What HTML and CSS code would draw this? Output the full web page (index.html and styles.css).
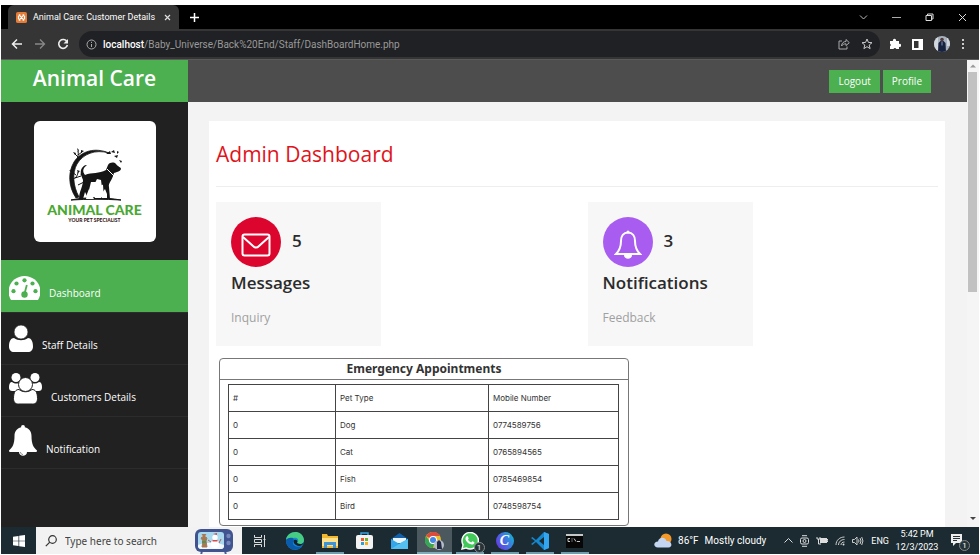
FILE: index.html
```html
<!DOCTYPE html>
<html lang="en">
<head>
<meta charset="utf-8">
<title>Animal Care: Customer Details</title>
<link rel="stylesheet" href="styles.css">
</head>
<body>
<div class="tabstrip">
  <div class="tab">
    <svg class="favicon" viewBox="0 0 12 12"><rect width="12" height="12" rx="2" fill="#e57b35"/><path d="M3.2 3.2 8.8 8.8M8.8 3.2 3.2 8.8M2.7 4v4M9.3 4v4M3 3.2h1.8M3 8.8h1.8M7.2 3.2H9M7.2 8.8H9" stroke="#fff" stroke-width="1.3" fill="none"/></svg>
    <span class="tab-title">Animal Care: Customer Details</span>
    <button class="icon-btn" aria-label="Close tab"><svg width="7" height="7" viewBox="0 0 7 7"><path d="M1 1l5 5M6 1L1 6" stroke="#ddd" stroke-width="1.2"/></svg></button>
  </div>
  <button class="icon-btn new-tab" aria-label="New tab"><svg width="9" height="9" viewBox="0 0 9 9"><path d="M4.500 0v9M0 4.500h9" stroke="#fff" stroke-width="1.5"/></svg></button>
  <div class="window-controls">
    <button class="icon-btn" aria-label="Search tabs"><svg width="9" height="9" viewBox="0 0 9 9"><path d="M1 2.500l3.500 3.500L8 2.500" stroke="#bbb" fill="none"/></svg></button>
    <button class="icon-btn" aria-label="Minimize"><svg width="9" height="9" viewBox="0 0 9 9"><path d="M0 4.500h9" stroke="#aaa"/></svg></button>
    <button class="icon-btn" aria-label="Restore"><svg width="9" height="9" viewBox="0 0 9 9"><path d="M1 2.500h5.500v5H1zM2.500 2.500v-1.500H8v5H6.500" stroke="#ddd" fill="none"/></svg></button>
    <button class="icon-btn" aria-label="Close"><svg width="9" height="9" viewBox="0 0 9 9"><path d="M1 1l7 7M8 1L1 8" stroke="#ddd"/></svg></button>
  </div>
</div>
<div class="toolbar">
  <div class="nav-buttons">
    <button class="icon-btn" aria-label="Back"><svg width="12" height="12" viewBox="0 0 12 12"><path d="M11 6H1.500M6 1.500L1.500 6 6 10.500" stroke="#eee" stroke-width="1.5" fill="none"/></svg></button>
    <button class="icon-btn" aria-label="Forward"><svg width="12" height="12" viewBox="0 0 12 12"><path d="M1 6h9.500M6 1.500L10.500 6 6 10.500" stroke="#888" stroke-width="1.3" fill="none"/></svg></button>
    <button class="icon-btn" aria-label="Reload"><svg width="12" height="12" viewBox="0 0 12 12"><path d="M10 3.800A4.400 4.400 0 1 0 10.400 7" stroke="#eee" stroke-width="1.6" fill="none"/><path d="M11 1v4.500H6.500z" fill="#eee"/></svg></button>
  </div>
  <div class="address">
    <svg width="11" height="11" viewBox="0 0 11 11"><circle cx="5.500" cy="5.500" r="4.500" fill="none" stroke="#aaa"/><path d="M5.500 5v3M5.500 2.800v1.200" stroke="#aaa"/></svg>
    <span class="url"><b>localhost</b>/Baby_Universe/Back%20End/Staff/DashBoardHome.php</span>
    <button class="icon-btn share" aria-label="Share"><svg width="12" height="12" viewBox="0 0 12 12"><path d="M4 3H1v8h8V8.500M3.500 8c.3-3 2-4.500 4.500-4.500V1.500L11.300 4.700 8 7.600V5.800C6 5.800 4.500 6.500 3.500 8z" fill="none" stroke="#aaa"/></svg></button>
    <button class="icon-btn" aria-label="Bookmark"><svg width="12" height="12" viewBox="0 0 12 12"><path d="M6 1l1.400 3.400 3.600.3-2.800 2.300.9 3.600L6 8.700l-3.100 1.900.9-3.600L1 4.700l3.600-.3z" fill="none" stroke="#ccc"/></svg></button>
  </div>
  <div class="extensions">
    <button class="icon-btn" aria-label="Extensions"><svg width="12" height="12" viewBox="0 0 12 12"><path d="M1 3h3a1.600 1.600 0 1 1 3 0h3v3a1.500 1.500 0 1 1 0 2.800V11H7.300a1.500 1.500 0 0 0-2.800 0H1V8.300a1.500 1.500 0 0 0 0-2.600z" fill="#fff"/></svg></button>
    <button class="icon-btn" aria-label="Side panel"><svg width="11" height="11" viewBox="0 0 11 11"><path d="M0 0h11v11H0zM2 2v7h4.500V2z" fill="#fff" fill-rule="evenodd"/></svg></button>
    <button class="icon-btn" aria-label="Account"><svg width="16" height="16" viewBox="0 0 16 16"><clipPath id="face"><circle cx="8" cy="8" r="8"/></clipPath><g clip-path="url(#face)"><path d="M0 0h16v16H0z" fill="#a9b3bf"/><path d="M0 0h4v16H0zM13 0h3v10h-3z" fill="#d2d8df"/><path d="M4.500 7l2-2h3l2 2 .5 9H4z" fill="#17233f"/><circle cx="8" cy="3.500" r="1.800" fill="#513c3b"/><path d="M7.500 5.500h1v4h-1z" fill="#8093b8"/></g></svg></button>
    <button class="icon-btn" aria-label="Menu"><svg width="4" height="12" viewBox="0 0 4 12"><path d="M1 1h2v2H1zM1 5h2v2H1zM1 9h2v2H1z" fill="#ccc"/></svg></button>
  </div>
</div>

<div class="viewport">
  <aside class="sidebar">
    <div class="brand">Animal Care</div>
    <div class="logo">
      <svg viewBox="0 0 60 54" width="60" height="54">
        <path d="M11 50C3 38 3 24 9 14 16 3 30-1 44 5 30 1 18 6 12 16 7 25 8 38 14 49z" fill="#151515" stroke="#151515" stroke-width=".8"/>
        <path d="M6 52c14-3 32-3 50 0-16-1-34-1-50 0z" fill="#151515" stroke="#151515"/>
        <path d="M18 32c-1-3-3-6-2-10 1-3 3-5 6-5-4 3-5 6-2 10 7-3 14-1 21-5l2-5c2-3 6-3 8-1 2 3 5 3 5 5-1 3-5 3-7 4-2 8-6 10-5 14l1 12h-6l-1-14c-3-1-2 3-3 8l-3-6-1-5h-5l-2 8-2 6-2-4-2 7h-4c0-8 4-12 4-19z" fill="#151515"/>
        <path d="M22 46l2-5 2 5 3 5h-8zM30 35l2-4 4 1 1 8-1 10h-6zM37 45l3-4 2 5v4h-5z" fill="#fff"/>
        <path d="M42 21l7 7" stroke="#fff" stroke-width="1"/>
        <path d="M13 13c-1-4 1-7 0-10M13 9L9 5M13 7l4-3M8 31c3-1 5-4 5-7M10 30l6-2M11 27l-4-3M13 37l6-3" stroke="#151515" stroke-width="1" fill="none"/>
        <path d="M8 4l3 1-1 2zM12 0l2 2-1 2zM16 2l3 1-3 2zM41 6l4-3 1 3zM46 4l3-2 1 3zM49 8l4-1-1 3zM54 12l3 1-1 2zM4 22l4 1-1 2zM12 22l3 1-2 2zM15 26l4-1-1 3zM52 3l2 1-2 2z" fill="#151515"/>
      </svg>
      <span class="logo-name">ANIMAL CARE</span>
      <span class="logo-tag">YOUR PET SPECIALIST</span>
    </div>
    <nav class="menu">
      <a class="active" href="#"><svg width="31" height="24" viewBox="0 0 31 24"><path d="M2 24C-5 12 4 0 15.500 0S36 12 29 24z" fill="#fff"/><g fill="#4caf50"><circle cx="15.500" cy="4.300" r="2.100"/><circle cx="7.500" cy="7.500" r="2.100"/><circle cx="23.500" cy="7.500" r="2.100"/><circle cx="4.500" cy="15.200" r="2.100"/><circle cx="26.500" cy="15.200" r="2.100"/><circle cx="15.500" cy="18.500" r="3.200"/></g><path d="M15.500 18l2.300-9" stroke="#4caf50" stroke-width="1.800"/></svg>Dashboard</a>
      <a href="#"><svg width="24" height="27" viewBox="0 0 24 27"><path d="M5 13c-3 0-5 3-5 8.500C0 25 2 27 5 27h14c3 0 5-2 5-5.500 0-5.500-2-8.500-5-8.500-4 3-10 3-14 0z" fill="#fff"/><circle cx="12" cy="7" r="7" fill="#fff" stroke="#212121" stroke-width=".7"/></svg>Staff Details</a>
      <a href="#"><svg width="33" height="31" viewBox="0 0 33 31"><g fill="#fff"><circle cx="7" cy="4.500" r="4.500"/><circle cx="26" cy="4.500" r="4.500"/><path d="M3 9c3 2 6 2 8 0v9H4c-3 0-4-1-4-4s1-5 3-5zM30 9c-3 2-6 2-8 0v9h7c3 0 4-1 4-4s-1-5-3-5z"/><path d="M10 16.500c-3 0-5.500 2-5.500 9 0 4 2 5.500 5 5.500h14c3 0 5-1.500 5-5.500 0-7-2.500-9-5.500-9-4 3-9 3-13 0z" stroke="#212121"/><circle cx="16.500" cy="11.500" r="7" stroke="#212121"/></g></svg>Customers Details</a>
      <a href="#"><svg width="28" height="31" viewBox="0 0 28 31"><path d="M14 0c1.500 0 2 1 1.800 2.300C20.500 3.300 22.500 7 22.500 11c0 8 2 11.500 5.500 14.500 0 1-.5 1.500-1.500 1.500H18c0 5-8 5-8 0H1.500C.5 27 0 26.500 0 25.500 3.500 22.500 5.500 19 5.500 11c0-4 2-7.700 6.700-8.700C12 1 12.500 0 14 0z" fill="#fff"/><path d="M11.500 27c0 1.500 1 2.500 2.500 2.500" stroke="#6e7780" stroke-width=".8" fill="none"/></svg>Notification</a>
    </nav>
  </aside>
  <div class="page">
    <header class="topbar"><button>Logout</button><button>Profile</button></header>
    <main class="panel">
      <h1>Admin Dashboard</h1>
      <div class="cards">
        <section class="card">
          <div class="card-head"><span class="badge red"><svg width="30" height="24" viewBox="0 0 30 24"><rect x="1.500" y="1.500" width="27" height="21" rx="2" fill="none" stroke="#fff" stroke-width="2"/><path d="M2 4l10 9c2 2 4 2 6 0L28 4" fill="none" stroke="#fff" stroke-width="2"/></svg></span><strong>5</strong></div>
          <h2>Messages</h2><p>Inquiry</p>
        </section>
        <section class="card">
          <div class="card-head"><span class="badge purple"><svg width="28" height="30" viewBox="0 0 28 30"><path d="M14 2.500C9.500 2.500 7 6 7 11c0 7-2 10-5 13h24c-3-3-5-6-5-13 0-5-2.500-8.500-7-8.500z" fill="none" stroke="#fff" stroke-width="2"/><circle cx="14" cy="2" r="1.500" fill="#fff"/><path d="M10 25h8c0 5-8 5-8 0z" fill="#fff"/></svg></span><strong>3</strong></div>
          <h2>Notifications</h2><p>Feedback</p>
        </section>
      </div>
      <section class="appointments">
        <h3>Emergency Appointments</h3>
        <div class="table-wrap">
        <table>
          <thead><tr><th class="col-id">#</th><th class="col-pet">Pet Type</th><th>Mobile Number</th></tr></thead>
          <tbody>
            <tr><td>0</td><td>Dog</td><td>0774589756</td></tr>
            <tr><td>0</td><td>Cat</td><td>0765894565</td></tr>
            <tr><td>0</td><td>Fish</td><td>0785469854</td></tr>
            <tr><td>0</td><td>Bird</td><td>0748598754</td></tr>
          </tbody>
        </table>
        </div>
      </section>
    </main>
  </div>
  <div class="scrollbar">
    <svg width="12" height="12" viewBox="0 0 12 12"><path d="M3 7.500h6l-3-3z" fill="#999"/></svg>
    <div class="track"><div class="thumb"></div></div>
    <svg width="12" height="16" viewBox="0 0 12 16"><path d="M3 6h6l-3 3z" fill="#444"/></svg>
  </div>
</div>

<footer class="taskbar">
  <button class="start" aria-label="Start"><svg width="12" height="12" viewBox="0 0 12 12"><path d="M0 1.700l5.500-.8v4.800H0zM6.200.8L12 0v5.700H6.200zM0 6.300h5.500v4.800L0 10.300zM6.200 6.300H12V12l-5.800-.8z" fill="#fff"/></svg></button>
  <label class="search">
    <svg width="12" height="12" viewBox="0 0 12 12"><circle cx="7.500" cy="4.500" r="3.800" fill="none" stroke="#333" stroke-width="1.200"/><path d="M4.800 7.200L.8 11.200" stroke="#333" stroke-width="1.200"/></svg>
    <input type="text" placeholder="Type here to search" aria-label="Type here to search">
    <svg class="tv" width="38" height="26" viewBox="0 0 38 26"><path d="M7 24l-1 2M30 24l1 2" stroke="#4a5c95" stroke-width="2"/><rect y="1" width="38" height="23" rx="6" fill="#40558f"/><rect x="3" y="4" width="26" height="17" rx="3" fill="#a8d9ef"/><path d="M3 17c7-3 18-3 26 0v2l-2 2H5l-2-2z" fill="#f4f9ff"/><path d="M7 6l2 3 2-3M9 8l3 2-1 3 1 6H7l1-6-2-3z" fill="#a97850" stroke="#a97850"/><path d="M7 13h4v2H7z" fill="#4b9456"/><circle cx="20" cy="16" r="4" fill="#fff"/><circle cx="20" cy="9.500" r="2.700" fill="#fff"/><path d="M17.500 12h5v1.500h-5zM18 6l4-1v2z" fill="#d6464b"/><path d="M26 11l-2 4M16 14l-3-2" stroke="#b85c53"/><circle cx="33.500" cy="8" r="2.200" fill="#7587bd"/><circle cx="33.500" cy="15" r="2.200" fill="#7587bd"/></svg>
  </label>
  <div class="apps">
    <button aria-label="Task view"><svg width="13" height="12" viewBox="0 0 13 12"><path d="M1.500 0v2.500h7V0M1.500 12V9.500h7V12M1.500 4.500h7v3h-7zM11.500 0v12M10.500 4.500h2" fill="none" stroke="#ddd"/></svg></button>
    <button aria-label="Edge"><svg width="18" height="18" viewBox="0 0 18 18"><circle cx="9" cy="9" r="9" fill="#1688d4"/><path d="M0 8C1-2 17-3 18 8c0 4-4 5-7 3 3-3 0-6-3-5C4 5 1 7 0 8z" fill="#46cc83"/><path d="M0 8c4-4 10-2 7 2-1 3 3 6 9 4-5 7-16 4-16-6z" fill="#0b5bad"/><path d="M8 8c3-1 4 1 3 3 3 2 6 1 7-1-1 4-5 5-8 3-2-1-3-3-2-5z" fill="#14232a"/></svg></button>
    <button class="open" aria-label="File Explorer"><svg width="16" height="14" viewBox="0 0 16 14"><path d="M0 0h5l1 2h10v12H0z" fill="#f2b62f"/><path d="M0 4h16v8H0z" fill="#ffe08a"/><path d="M2 8h12v6h-3v-3H5v3H2z" fill="#3d93d8"/></svg></button>
    <button aria-label="Microsoft Store"><svg width="17" height="17" viewBox="0 0 17 17"><path d="M5 4V1h7v3" fill="none" stroke="#35a4de" stroke-width="1.500"/><rect y="3" width="17" height="14" rx="2" fill="#f3f3f3"/><path d="M5 6h3v3H5z" fill="#ed5a2f"/><path d="M9 6h3v3H9z" fill="#72b52c"/><path d="M5 10h3v3H5z" fill="#2aa0dc"/><path d="M9 10h3v3H9z" fill="#f2ae20"/></svg></button>
    <button aria-label="Mail"><svg width="17" height="16" viewBox="0 0 17 16"><path d="M0 6l8.500-6L17 6v10H0z" fill="#135fa9"/><path d="M2 5h13v5H2z" fill="#e9f4fb"/><path d="M0 6l8.500 5L17 6v10H0z" fill="#33a5e8"/><path d="M0 16l11-7 6-3v10z" fill="#54c0f2"/></svg></button>
    <button class="open current" aria-label="Chrome"><svg width="19" height="18" viewBox="0 0 19 18"><circle cx="8" cy="8" r="8" fill="#eabf2f"/><path d="M8 8L1 4C5-2 13-1 15 4H8z" fill="#dc4b3e"/><path d="M8 16C1 16-2 9 1 4l4 6 4 2z" fill="#37a557"/><circle cx="8" cy="8" r="4" fill="#fff"/><circle cx="8" cy="8" r="3" fill="#4387e8"/><circle cx="14" cy="13" r="5" fill="#b5bcca"/><path d="M12 10l2-2 2 2 1 7h-5z" fill="#252a45"/></svg></button>
    <button class="open" aria-label="WhatsApp"><span class="with-count"><svg width="18" height="18" viewBox="0 0 18 18"><path d="M0 18l1.300-5A9 9 0 1 1 5 16.700z" fill="#fff"/><path d="M2 16l.8-3.400A7.500 7.500 0 1 1 5.500 15.200z" fill="#43c95a"/><path d="M5.500 4.500c1-1 1.500 0 2.200 2L7 7.700c1 1.700 2 2.300 3.200 2.700l1.100-1.200c2 .7 2.500 1 2 2-1.500 2.500-5 1-7-1-2-2-2.700-4.200-.8-5.700z" fill="#fff"/></svg><span class="count">1</span></span></button>
    <button class="open" aria-label="Canva"><span class="canva">C</span></button>
    <button class="open" aria-label="Visual Studio Code"><svg width="18" height="18" viewBox="0 0 18 18"><path d="M13 0l5 2v14l-5 2L5 10l-3.500 3L0 12l4-3-4-3 1.500-1L5 8zM13 5L8 9l5 4z" fill="#1587cf" fill-rule="evenodd"/><path d="M13 0l5 2v14l-5 2z" fill="#34a5ef"/></svg></button>
    <button class="open" aria-label="Command Prompt"><svg width="17" height="14" viewBox="0 0 17 14"><path d="M0 0h17v14H0z" fill="#070707"/><path d="M0 0h17v2H0z" fill="#c7c7c7"/><path d="M4 4.500H2v3h2M6 4.500v1M6 6.500v1M8 4.500l2 3M11 7.500h3" fill="none" stroke="#ddd" stroke-width=".9"/></svg></button>
  </div>
  <div class="weather"><svg width="18" height="15" viewBox="0 0 18 15"><circle cx="12" cy="6" r="5.500" fill="#f49a2b"/><path d="M4 14.500c-5 0-5-6 0-6C5 3 12 4 12.500 8c5-1 7 6 2 6.500z" fill="#c4d5f2"/></svg><span>86°F</span><span>Mostly cloudy</span></div>
  <div class="tray">
    <svg width="9" height="9" viewBox="0 0 9 9"><path d="M.5 6.500l4-4 4 4" fill="none" stroke="#ddd"/></svg>
    <svg width="9" height="12" viewBox="0 0 9 12"><rect x=".5" y="3" width="8" height="6" rx="1.500" fill="none" stroke="#ddd"/><circle cx="4.500" cy="6" r="1.500" fill="none" stroke="#ddd"/><path d="M2 .7h5M2 11.300h5" stroke="#ddd"/></svg>
    <svg width="12" height="9" viewBox="0 0 12 9"><path d="M4 2h7v5H4z" fill="#ddd"/><path d="M11 3.500h1v2h-1zM1 1v2h3V1M2.500 3v5H5" fill="none" stroke="#ddd"/></svg>
    <svg width="10" height="10" viewBox="0 0 10 10"><path d="M1 9C1 4 5 1 9.500 1M3.500 9c0-3 2.500-5.500 6-5.500M6 9c0-2 1.500-3 3.500-3" fill="none" stroke="#ccc"/><circle cx="8.500" cy="8.500" r="1" fill="#ddd"/></svg>
    <svg width="12" height="10" viewBox="0 0 12 10"><path d="M.5 3.500h2L5 1v8L2.500 6.500h-2zM6.500 3.500q1 1.500 0 3M8 2q2 3 0 6M9.700 1q2.500 4 0 8" fill="none" stroke="#ccc"/></svg>
    <span>ENG</span>
  </div>
  <div class="clock"><span>5:42 PM</span><span>12/3/2023</span></div>
  <button class="notices" aria-label="Notifications"><span class="with-count"><svg width="14" height="14" viewBox="0 0 14 14"><path d="M1 0h11v9H6l-3 3V9H1z" fill="#eee"/><path d="M3 2.500h7M3 4.500h7M3 6.500h4" stroke="#26343a"/></svg><span class="count">1</span></span></button>
</footer>
</body>
</html>
```
FILE: styles.css
```css
* { box-sizing: border-box; }
body {
  margin: 0;
  padding: 5px 1px 1px;
  height: 100vh;
  display: flex;
  flex-direction: column;
  overflow: hidden;
  background: #fff;
  font-family: "Open Sans", sans-serif;
  font-size: 10px;
}
button { border: 0; padding: 0; background: none; color: inherit; font: inherit; }
svg { flex: none; display: block; }
.icon-btn { display: flex; align-items: center; justify-content: center; }

/* Browser window */
.tabstrip { display: flex; flex: none; height: 24px; background: #000; color: #fff; }
.tab {
  display: flex;
  align-items: center;
  gap: 6px;
  margin-left: 7px;
  width: 171px;
  padding: 0 8px;
  border-radius: 6px 6px 0 0;
  background: #353535;
}
.favicon { width: 11px; height: 11px; }
.tab-title { flex: 1; font: 9px Roboto, sans-serif; white-space: nowrap; }
.new-tab { margin-left: 11px; }
.window-controls { display: flex; gap: 24px; margin-left: auto; padding-right: 12px; }
.toolbar {
  display: flex;
  flex: none;
  align-items: center;
  height: 31px;
  background: #353535;
  border-bottom: 1px solid #5a5a5a;
}
.nav-buttons { display: flex; width: 78px; padding-left: 10px; gap: 11px; }
.address {
  display: flex;
  flex: 1;
  align-items: center;
  gap: 6px;
  height: 26px;
  padding: 0 7px;
  border-radius: 13px;
  background: #202124;
  color: #999;
}
.url { flex: 1; font: 10px Roboto, sans-serif; }
.url b { color: #fff; font-weight: 500; }
.share { margin-right: 5px; }
.extensions { display: flex; align-items: center; gap: 11px; padding: 0 14px 0 9px; }

/* Page */
.viewport { display: flex; flex: 1; min-height: 0; background: #f3f3f3; }
.sidebar { flex: none; width: 187px; background: #212121; color: #fff; }
.brand {
  height: 42px;
  background: #4caf50;
  font-size: 21px;
  font-weight: 600;
  line-height: 36px;
  text-align: center;
}
.logo {
  display: flex;
  flex-direction: column;
  align-items: center;
  width: 122px;
  height: 121px;
  margin: 19px auto 18px;
  padding-top: 27px;
  border-radius: 6px;
  background: #fff;
  white-space: nowrap;
}
.logo-name { color: #4aa832; font: 900 14px/15px Lato, sans-serif; }
.logo-tag { color: #3c211b; font: 900 5px/7px Lato, sans-serif; }
.menu a {
  display: flex;
  align-items: flex-end;
  gap: 9px;
  height: 52px;
  padding: 0 8px 12px;
  border-bottom: 1px solid #2c2c2c;
  color: #fff;
  line-height: 14px;
  text-decoration: none;
}
.menu .active { background: #4caf50; height: 53px; }
.page { display: flex; flex: 1; flex-direction: column; min-width: 0; }
.topbar {
  display: flex;
  flex: none;
  align-items: center;
  justify-content: flex-end;
  gap: 3px;
  height: 42px;
  padding-right: 36px;
  background: #4d4d4d;
  color: #fff;
}
.topbar button { height: 23px; padding: 0 9px; background: #4caf50; }
.panel { flex: 1; min-height: 0; margin: 19px 22px 0 21px; padding: 0 7px; background: #fff; }
h1 {
  margin: 0 0 15px;
  height: 66px;
  border-bottom: 1px solid #eee;
  color: #e0141b;
  font-size: 21px;
  font-weight: 400;
  line-height: 66px;
}
.cards { display: grid; grid-template-columns: 1fr 1fr; gap: 21px; }
.card { width: 165px; height: 144px; padding: 15px; background: #f7f7f7; color: #2b2b2b; }
.card-head { display: flex; gap: 11px; }
.card-head strong { font-size: 17px; font-weight: 600; line-height: 48px; }
.badge { display: flex; align-items: center; justify-content: center; width: 50px; height: 50px; padding-top: 6px; border-radius: 50%; }
.red { background: #dc052d; }
.purple { background: #a95cf0; }
h2 { margin: 3px 0 14px; font-size: 17px; font-weight: 600; line-height: 26px; }
.card p { margin: 0; color: #a0a0a0; font-size: 12px; line-height: 16px; }
.appointments {
  position: relative;
  width: 410px;
  margin: 12px 0 0 3px;
  border: 1px solid #777;
  border-radius: 4px;
  background: #fff;
  color: #333;
}
h3 {
  margin: 0;
  border-bottom: 1px solid #777;
  font: 700 12px/20px "Noto Sans", sans-serif;
  text-align: center;
}
.table-wrap { padding: 4px 9px 5px 8px; }
table { width: 100%; border-collapse: collapse; table-layout: fixed; font: 8px Inter, sans-serif; }
th, td { height: 27px; padding: 0 4px; border: 1px solid #444; text-align: left; font-weight: 400; }
.col-id { width: 107px; }
.col-pet { width: 153px; }
.scrollbar { display: flex; flex: none; flex-direction: column; width: 12px; background: #f5f5f5; }
.track { flex: 1; padding: 0 2px 0 1px; }
.thumb { height: 50%; background: #c1c1c1; }

/* Taskbar */
.taskbar { display: flex; flex: none; height: 27px; background: #1b2b31; color: #fff; font: 10px Roboto, sans-serif; }
.start { display: flex; align-items: center; justify-content: center; width: 35px; }
.search { display: flex; align-items: center; gap: 8px; width: 206px; padding: 0 9px; background: #f2f2f2; }
.search input { flex: 1; min-width: 0; border: 0; padding: 0; background: none; color: #444; font: 10px "Noto Sans", sans-serif; }
.search input::placeholder { color: #444; }
.apps { display: flex; }
.apps button { display: flex; align-items: center; justify-content: center; width: 35px; }
.apps .open { background: linear-gradient(#6f9fae, #6f9fae) bottom / 28px 2px no-repeat; }
.apps .current { background: linear-gradient(#7eacba, #7eacba) bottom / 100% 2px no-repeat #4b585d; }
.canva {
  width: 18px;
  height: 18px;
  border-radius: 50%;
  background: linear-gradient(60deg, #6a2ddb, #4c67e5 45%, #0bc0cf);
  font: italic 700 14px/17px "Liberation Serif", serif;
}
.with-count { position: relative; }
.count {
  position: absolute;
  right: -6px;
  bottom: -3px;
  width: 11px;
  height: 11px;
  border: 1px solid #888;
  border-radius: 50%;
  background: #26343a;
  font-size: 8px;
  line-height: 9px;
  text-align: center;
}
.weather { display: flex; align-items: center; gap: 6px; margin-left: auto; }
.tray { display: flex; align-items: center; gap: 7px; margin-left: 18px; font-size: 9px; }
.clock { display: flex; flex-direction: column; justify-content: center; width: 56px; font-size: 9px; line-height: 13px; text-align: center; }
.notices { display: flex; align-items: center; justify-content: center; width: 24px; margin-right: 10px; }
```
